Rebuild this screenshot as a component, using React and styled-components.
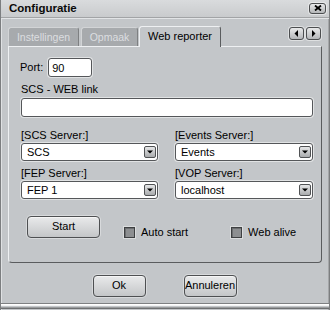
import React from "react"
import styled, { createGlobalStyle } from "styled-components"

const FONT = `"Liberation Sans", Arial, sans-serif`
const BG = "#c3c6c9"
const DARK_EDGE = "#5a5c5e"
const LIGHT_EDGE = "#eef0f2"

const GlobalStyle = createGlobalStyle`
  html, body {
    margin: 0;
    padding: 0;
    background: ${BG};
  }
  * {
    box-sizing: border-box;
  }
`

const Window = styled.div`
  display: flex;
  flex-flow: column nowrap;
  width: 330px;
  height: 310px;
  background: ${BG};
  border-left: 1px solid #7c7e80;
  border-right: 1px solid #7c7e80;
  box-shadow: inset 1px 0 0 #dfe1e3, inset -1px 0 0 #a4a6a8;
  font-family: ${FONT};
  font-size: 11px;
  color: #000;
  overflow: hidden;
`

const TitleBar = styled.div`
  display: flex;
  flex-flow: row nowrap;
  justify-content: space-between;
  align-items: center;
  height: 18px;
  padding: 0 3px 1px 8px;
  background: linear-gradient(#d9dbdd, #c9cbcd);
  border-bottom: 1px solid #a2a4a6;
  box-shadow: 0 1px 0 #e2e4e6;
`

const Title = styled.div`
  font-weight: bold;
  font-size: 11.5px;
  color: #0a0a0a;
`

const SmallButton = styled.div`
  display: flex;
  justify-content: center;
  align-items: center;
  width: ${(p) => p.$w}px;
  height: ${(p) => p.$h}px;
  border: 1px solid #4c4e50;
  border-radius: 3px;
  background: linear-gradient(#e8e9ea, #b4b6b8);
  box-shadow: 0 0 0 1px rgba(255, 255, 255, 0.45);
`

const Body = styled.div`
  display: flex;
  flex-flow: column nowrap;
  padding: 8px 7px 0 7px;
`

const TabRow = styled.div`
  display: flex;
  flex-flow: row nowrap;
  align-items: flex-end;
  height: 20px;
  position: relative;
  z-index: 1;
`

const Tab = styled.div`
  display: flex;
  justify-content: center;
  align-items: center;
  width: ${(p) => p.$w}px;
  height: ${(p) => (p.$active ? 21 : 19)}px;
  margin-right: ${(p) => p.$gap}px;
  margin-bottom: ${(p) => (p.$active ? -1 : 0)}px;
  padding-bottom: ${(p) => (p.$active ? 2 : 0)}px;
  border: 1px solid;
  border-bottom: none;
  border-color: ${(p) =>
    p.$active
      ? `${LIGHT_EDGE} ${DARK_EDGE} transparent ${LIGHT_EDGE}`
      : `#d2d4d6 #7e8082 transparent #d2d4d6`};
  border-radius: 3px 3px 0 0;
  background: ${(p) => (p.$active ? BG : "#a7aaad")};
  color: ${(p) => (p.$active ? "#000" : "#dcdee0")};
  font-size: ${(p) => (p.$active ? 11 : 10.5)}px;
`

const TabNav = styled.div`
  display: flex;
  flex-flow: row nowrap;
  gap: 2px;
  margin-left: auto;
  margin-right: 1px;
  align-self: flex-start;
  margin-top: 1px;
`

const Panel = styled.div`
  display: flex;
  flex-flow: column nowrap;
  height: 217px;
  padding: 11px 8px 0 12px;
  border: 1px solid;
  border-color: ${LIGHT_EDGE} ${DARK_EDGE} ${DARK_EDGE} ${LIGHT_EDGE};
  border-radius: 0 0 4px 4px;
  background: ${BG};
`

const PortRow = styled.div`
  display: flex;
  flex-flow: row nowrap;
  align-items: center;
  gap: 5px;
  margin-left: -1px;
`

const Label = styled.div`
  line-height: 13px;
  white-space: nowrap;
  margin-top: ${(p) => p.$mt || 0}px;
  margin-bottom: ${(p) => p.$mb || 0}px;
`

const TextBox = styled.div`
  display: flex;
  align-items: center;
  width: ${(p) => (p.$w ? `${p.$w}px` : "100%")};
  height: 19px;
  padding-left: 3px;
  background: #fff;
  border: 1px solid #55575a;
  border-radius: 3px;
  box-shadow: 0 0 0 1px rgba(255, 255, 255, 0.5);
`

const Grid = styled.div`
  display: grid;
  grid-template-columns: 137px 138px;
  column-gap: 17px;
  margin-top: 12px;
`

const Field = styled.div`
  display: flex;
  flex-flow: column nowrap;
  margin-bottom: ${(p) => p.$mb || 0}px;
`

const Select = styled.div`
  display: flex;
  flex-flow: row nowrap;
  justify-content: space-between;
  align-items: center;
  height: 18px;
  padding: 0 1px 0 5px;
  background: #fff;
  border: 1px solid #55575a;
  border-radius: 3px;
  box-shadow: 0 0 0 1px rgba(255, 255, 255, 0.5);
`

const DropButton = styled.div`
  display: flex;
  justify-content: center;
  align-items: center;
  width: 12px;
  height: 12px;
  border: 1px solid #505254;
  border-radius: 2px;
  background: linear-gradient(#e6e7e8, #a9abad);
`

const ActionRow = styled.div`
  display: flex;
  flex-flow: row nowrap;
  align-items: flex-end;
  margin-top: 17px;
  padding-left: 6px;
`

const PushButton = styled.div`
  display: flex;
  justify-content: center;
  align-items: center;
  width: ${(p) => p.$w}px;
  height: ${(p) => p.$h}px;
  padding-bottom: 2px;
  border: 1px solid #4e5052;
  border-radius: 4px;
  background: linear-gradient(#e9eaeb, #c4c6c8);
  box-shadow: 0 0 0 1px rgba(255, 255, 255, 0.35), inset 0 1px 0 #f6f6f6;
  color: #000;
`

const Check = styled.div`
  display: flex;
  flex-flow: row nowrap;
  align-items: center;
  gap: 6px;
  margin-left: ${(p) => p.$ml}px;
`

const CheckBox = styled.div`
  width: 11px;
  height: 11px;
  border: 1px solid #3e4042;
  background: #8d8f91;
  box-shadow: inset 1px 1px 0 #6c6e70, 0 0 0 1px rgba(255, 255, 255, 0.4);
`

const Footer = styled.div`
  display: flex;
  flex-flow: row nowrap;
  justify-content: center;
  gap: 38px;
  margin-top: 12px;
  padding-right: 1px;
`

const BottomEdge = styled.div`
  margin-top: auto;
  margin-bottom: 1px;
  height: 6px;
  border-top: 1px solid #7e8082;
  border-bottom: 1px solid #6e7072;
  box-shadow: inset 0 1px 0 #ffffff, inset 0 2px 0 #f2f3f4, inset 0 -1px 0 #9a9c9e;
  background: ${BG};
`

const Arrow = ({ dir }) => (
  <svg width="5" height="7" viewBox="0 0 5 7">
    {dir === "left" ? (
      <polygon points="4,0 4,7 0.5,3.5" fill="#000" />
    ) : (
      <polygon points="1,0 1,7 4.5,3.5" fill="#000" />
    )}
  </svg>
)

const Down = () => (
  <svg width="6" height="4" viewBox="0 0 6 4">
    <polygon points="0,0.5 6,0.5 3,3.5" fill="#000" />
  </svg>
)

const Close = () => (
  <svg width="8" height="6" viewBox="0 0 8 6">
    <path d="M1 0.5 L7 5.5 M7 0.5 L1 5.5" stroke="#000" strokeWidth="1.8" />
  </svg>
)

const Dropdown = ({ label, value, mb }) => (
  <Field $mb={mb}>
    <Label $mb={1}>{label}</Label>
    <Select>
      <span>{value}</span>
      <DropButton>
        <Down />
      </DropButton>
    </Select>
  </Field>
)

const App = () => (
  <>
    <GlobalStyle />
    <Window>
      <TitleBar>
        <Title>Configuratie</Title>
        <SmallButton $w={17} $h={11}>
          <Close />
        </SmallButton>
      </TitleBar>
      <Body>
        <TabRow>
          <Tab $w={71} $gap={2}>Instellingen</Tab>
          <Tab $w={57} $gap={1}>Opmaak</Tab>
          <Tab $w={82} $gap={0} $active>
            Web reporter
          </Tab>
          <TabNav>
            <SmallButton $w={15} $h={13}>
              <Arrow dir="left" />
            </SmallButton>
            <SmallButton $w={15} $h={13}>
              <Arrow dir="right" />
            </SmallButton>
          </TabNav>
        </TabRow>
        <Panel>
          <PortRow>
            <Label>Port:</Label>
            <TextBox $w={44}>90</TextBox>
          </PortRow>
          <Label $mt={6} $mb={2}>
            SCS - WEB link
          </Label>
          <TextBox />
          <Grid>
            <Dropdown label="[SCS Server:]" value="SCS" mb={6} />
            <Dropdown label="[Events Server:]" value="Events" mb={6} />
            <Dropdown label="[FEP Server:]" value="FEP 1" />
            <Dropdown label="[VOP Server:]" value="localhost" />
          </Grid>
          <ActionRow>
            <PushButton $w={73} $h={22}>Start</PushButton>
            <Check $ml={24}>
              <CheckBox />
              <span>Auto start</span>
            </Check>
            <Check $ml={43}>
              <CheckBox />
              <span>Web alive</span>
            </Check>
          </ActionRow>
        </Panel>
        <Footer>
          <PushButton $w={53} $h={22}>Ok</PushButton>
          <PushButton $w={53} $h={22}>Annuleren</PushButton>
        </Footer>
      </Body>
      <BottomEdge />
    </Window>
  </>
)

export default App
